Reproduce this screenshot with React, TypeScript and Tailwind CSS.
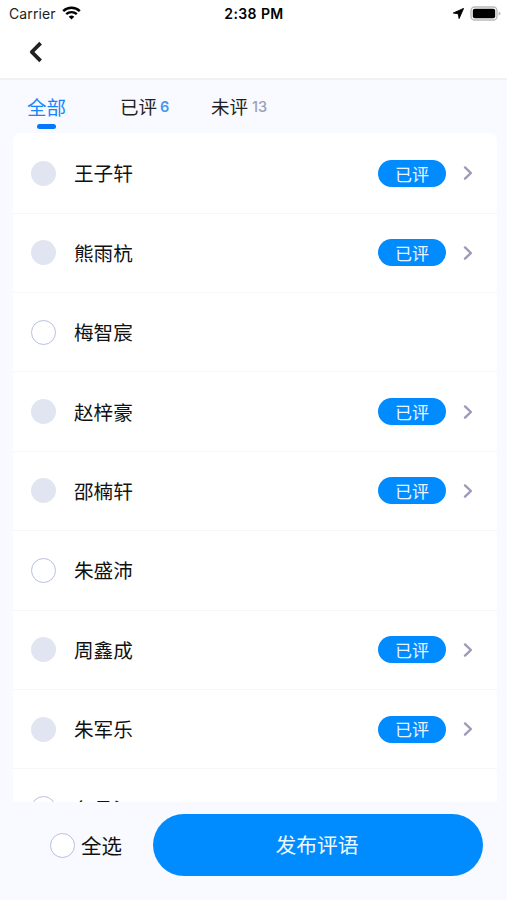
type Student = { name: string; reviewed: boolean };

const students: Student[] = [
  { name: "王子轩", reviewed: true },
  { name: "熊雨杭", reviewed: true },
  { name: "梅智宸", reviewed: false },
  { name: "赵梓豪", reviewed: true },
  { name: "邵楠轩", reviewed: true },
  { name: "朱盛沛", reviewed: false },
  { name: "周鑫成", reviewed: true },
  { name: "朱军乐", reviewed: true },
  { name: "鱼昌江", reviewed: false },
];

function StatusBar() {
  return (
    <div className="grid h-7 grid-cols-3 items-center pr-[7px] pl-[9px] font-['Inter','Liberation_Sans',sans-serif] text-black">
      <div className="flex items-center gap-[6px]">
        <span className="text-[14px] leading-7 tracking-[0.1px] text-[#222]">Carrier</span>
        <svg width="19" height="14" viewBox="0 0 19 14" className="-mt-[2px]" fill="none" stroke="#000">
          <path d="M1.2 5.1C5.8.7 13.2.7 17.8 5.1" strokeWidth="2.5" />
          <path d="M4.2 8.2C7.2 5.4 11.8 5.4 14.8 8.2" strokeWidth="2.4" />
          <path d="M9.5 13.6 6.7 10.8a4 4 0 0 1 5.6 0Z" fill="#000" stroke="none" />
        </svg>
      </div>
      <span className="-ml-[1px] text-center text-[14px] leading-7 font-semibold tracking-[0.4px] whitespace-nowrap">2:38 PM</span>
      <div className="flex items-center justify-end gap-[7px]">
        <svg width="11" height="11" viewBox="0 0 11 11" className="-mr-px -mt-[2px]">
          <path d="M10.6.4 6.1 10.6 5.2 5.8.3 5Z" fill="#000" stroke="#000" strokeWidth=".9" strokeLinejoin="round" />
        </svg>
        <svg width="31" height="15" viewBox="0 0 31 15" className="-mt-[2px] -mr-px">
          <rect x="1" y="1" width="26" height="13" rx="3.8" fill="#fff" stroke="#b9b9b5" strokeWidth="1.4" />
          <rect x="2.8" y="2.8" width="22.4" height="9.4" rx="2" fill="#000" />
          <path d="M28.6 5.4q2 .7 2 2.1t-2 2.1Z" fill="#b9b9b5" />
        </svg>
      </div>
    </div>
  );
}

function Circle({ filled = false }: { filled?: boolean }) {
  return (
    <span
      className={
        filled
          ? "size-[25px] shrink-0 rounded-full bg-[#e1e5f2]"
          : "size-[25px] shrink-0 rounded-full border border-[#b9bfe2] bg-white"
      }
    />
  );
}

function StudentRow({ student }: { student: Student }) {
  return (
    <li className="flex h-[79.4px] shrink-0 items-center border-b border-[#f5f7fa] pr-[24px] pl-[18px]">
      <Circle filled={student.reviewed} />
      <span className="ml-[18px] flex-1 text-[19.6px] leading-7 text-[#111]">{student.name}</span>
      {student.reviewed && (
        <>
          <span className="flex h-[27px] w-[68px] items-center justify-center rounded-full bg-[#008cff] text-[17px] text-[#e8f5ff]">
            已评
          </span>
          <svg width="10" height="16" viewBox="0 0 10 16" className="ml-[17px]" fill="none" stroke="#9b9bb9" strokeWidth="2.4" strokeLinecap="round" strokeLinejoin="round">
            <path d="M2 2.4 7.9 8 2 13.6" />
          </svg>
        </>
      )}
    </li>
  );
}

export default function App() {
  return (
    <div className="flex h-[900px] w-[507px] flex-col overflow-hidden bg-[#f8faff] font-['Noto_Sans_CJK_SC',sans-serif]">
      <header className="h-20 shrink-0 border-b-2 border-[#f0f1f3] bg-white">
        <StatusBar />
        <button aria-label="返回" className="mt-[13px] ml-[28px] block">
          <svg width="16" height="22" viewBox="0 0 16 22" fill="none" stroke="#222" strokeWidth="3.8">
            <path d="M12.6 2.2 3.8 11 12.6 19.8" strokeLinejoin="round" />
          </svg>
        </button>
      </header>

      <nav className="flex h-[53px] shrink-0 pl-[27px] text-[18.5px] leading-[27px] text-[#222]">
        <div className="flex w-[93px] flex-col items-start pt-[13px]">
          <div className="flex flex-col items-center">
            <span className="text-[19.5px] text-[#1684fa]">全部</span>
            <span className="mt-[4px] h-[5px] w-[19px] rounded-full bg-[#0876fa]" />
          </div>
        </div>
        <div className="flex w-[91px] items-start gap-[3px] pt-[13px]">
          <span>已评</span>
          <span className="font-['Inter',sans-serif] text-[14.5px] font-semibold text-[#4795ef]">6</span>
        </div>
        <div className="flex items-start gap-[4px] pt-[13px]">
          <span>未评</span>
          <span className="font-['Inter',sans-serif] text-[14.5px] font-medium text-[#9b9fbb]">13</span>
        </div>
      </nav>

      <ul className="mr-[10px] ml-[13px] flex h-[669px] shrink-0 flex-col overflow-hidden rounded-t-lg bg-white pt-[1.2px]">
        {students.map((student) => (
          <StudentRow key={student.name} student={student} />
        ))}
      </ul>

      <footer className="flex flex-1 items-start pt-[12px] pr-[24px] pl-[50px]">
        <label className="flex h-[62px] w-[103px] items-center gap-[6px] text-[20.5px] text-[#111]">
          <Circle />
          全选
        </label>
        <button className="h-[62px] flex-1 rounded-full bg-[#008cff] pr-[2px] text-[20.8px] text-[#f0f8ff]">
          发布评语
        </button>
      </footer>
    </div>
  );
}
